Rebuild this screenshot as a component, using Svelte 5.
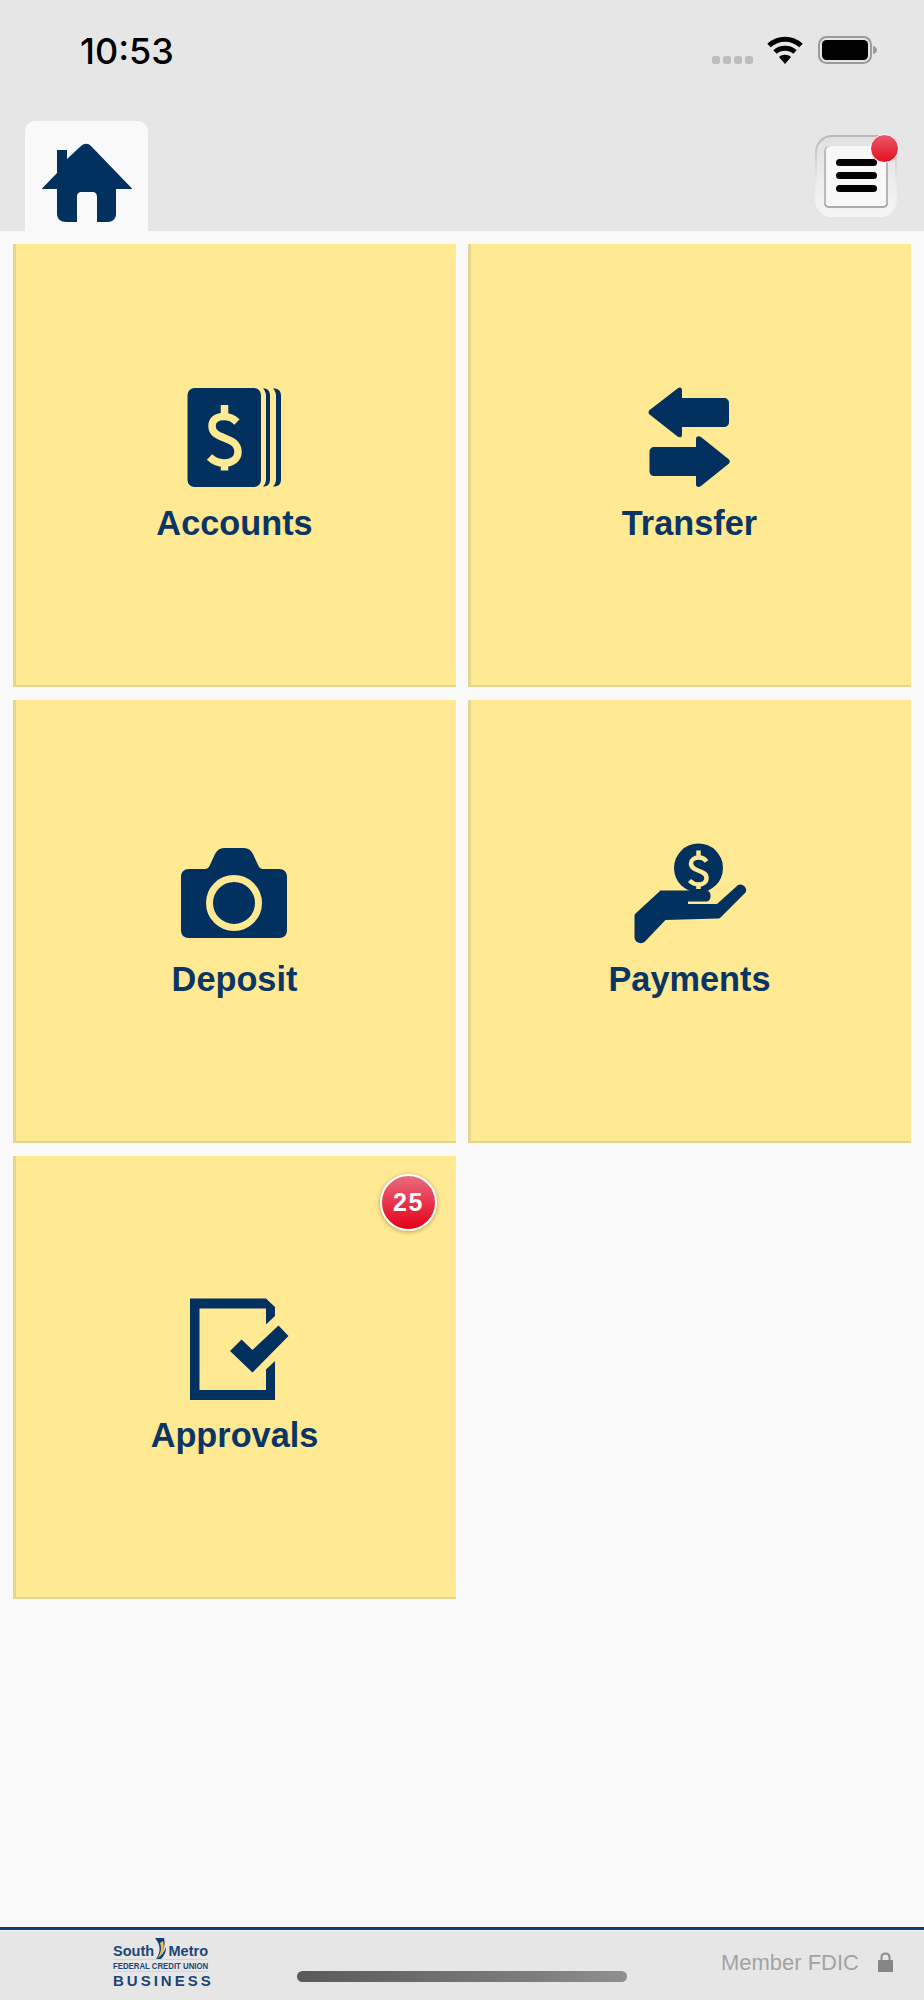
<script>
  const navy = '#02305f';
</script>

<div class="page">
  <header class="head">
    <div class="status">
      <span class="time">10:53</span>
      <svg class="sys" viewBox="712 36 165 28" width="165" height="28" aria-hidden="true">
        <g fill="#bdbdbd">
          <rect x="712" y="56" width="8" height="8" rx="2.5"/>
          <rect x="723" y="56" width="8" height="8" rx="2.5"/>
          <rect x="734" y="56" width="8" height="8" rx="2.5"/>
          <rect x="745" y="56" width="8" height="8" rx="2.5"/>
        </g>
        <g fill="none" stroke="#000" stroke-width="5">
          <path d="M769 45.5C778 37 792 37 801 45.5"/>
          <path d="M775 52C780.500 47 789.500 47 795 52"/>
        </g>
        <path d="M785 64L779 57C782 54 788 54 791 57Z" fill="#000"/>
        <rect x="819" y="37" width="52" height="26" rx="7.5" fill="none" stroke="#9b9b9b" stroke-width="2"/>
        <rect x="822" y="40" width="46" height="20" rx="4.5" fill="#000"/>
        <path d="M873 46C875.500 46.500 877 48 877 50S875.500 53.500 873 54Z" fill="#9b9b9b"/>
      </svg>
    </div>
    <nav class="nav">
      <div class="tab">
        <svg viewBox="42 143 90 79" width="90" height="79" aria-hidden="true">
          <path fill={navy} d="M57 150H67V159L81 146C84.500 143 88 143 91 146L132 188.500V189H116V214C116 219 112 222 108 222H97V197C97 193.500 95.500 192 92 192H82C78.500 192 77 193.500 77 197V222H66C61 222 57 219 57 214V189H42V188.500L57 173Z"/>
        </svg>
      </div>
      <button class="menu" aria-label="Menu">
        <span class="menu-inner">
          <span class="sheet">
            <i></i><i></i><i></i>
          </span>
        </span>
        <span class="dot"></span>
      </button>
    </nav>
  </header>

  <main class="grid">
    <div class="tile">
      <svg viewBox="175 379 120 110" width="120" height="110" aria-hidden="true">
        <rect x="187.500" y="388" width="73.500" height="99" rx="7" fill={navy}/>
        <path d="M263 388.500C268 388.500 270 391 270 396V479C270 484 268 486.500 263 486.500C265 484.500 266 482 266 479V396C266 393 265 390.500 263 388.500Z" fill={navy}/>
        <path d="M273 388.500C279 388.500 281 391 281 396V479C281 484 279 486.500 273 486.500C275 484.500 276 482 276 479V396C276 393 275 390.500 273 388.500Z" fill={navy}/>
        <g fill="none" stroke="#ffe992" stroke-width="7.500">
          <path d="M237 422C233 418 229 416.500 224 416.500C216 416.500 212 420.500 212 426C212 441 238 435 238 452C238 459 232 463 224 463C218.500 463 213.500 461 209.500 457"/>
          <path d="M224.500 405V416M224.500 463V470.500"/>
        </g>
      </svg>
      <span class="label">Accounts</span>
    </div>

    <div class="tile">
      <svg viewBox="630.5 379 120 110" width="120" height="110" aria-hidden="true">
        <path fill={navy} d="M649.500 410.500L678 388.500C680.500 386.500 682.500 387.500 682.500 390.500V398H724C727.500 398 729.500 400 729.500 403V422C729.500 425.500 727.500 427 724 427H682.500V434.500C682.500 437.500 680.500 438 678 436.500L649.500 414C649 413 649 411.500 649.500 410.500Z"/>
        <path fill={navy} d="M729.500 459.500L701.500 437C699 435.500 696.500 436 696.500 439V447H655C652 447 650 449 650 452V471C650 474 652 476 655 476H696.500V484C696.500 487 699 488 701.500 486L729.500 463.500C730.500 462.500 730.500 460.500 729.500 459.500Z"/>
      </svg>
      <span class="label">Transfer</span>
    </div>

    <div class="tile">
      <svg viewBox="175 834 120 110" width="120" height="110" aria-hidden="true">
        <path fill={navy} d="M189 868H205C207 868 208.500 867 209.500 865L215 853C217 849 220 847 224 847H244C248 847 251 849 253 853L258.500 865C259.500 867 261 868 263 868H279C284 868 287 871 287 876V929C287 934 284 937 279 937H189C184 937 181 934 181 929V876C181 871 184 868 189 868Z"/>
        <circle cx="234" cy="902" r="24.500" fill="none" stroke="#ffe992" stroke-width="7"/>
      </svg>
      <span class="label">Deposit</span>
    </div>

    <div class="tile">
      <svg viewBox="629.5 834 120 110" width="120" height="110" aria-hidden="true">
        <circle cx="698" cy="867" r="24.500" fill={navy}/>
        <g fill="none" stroke="#ffe992" stroke-width="4.500">
          <path d="M706 860.500C704 857.500 701.500 856.500 698.500 856.500C693.500 856.500 690.500 859 690.500 862.500C690.500 871 706 868.500 706 877C706 881 702.500 883.500 698 883.500C694.500 883.500 691.500 882 689 879.500"/>
          <path d="M698 849.500V856.500M698 883.500V888"/>
        </g>
        <path fill={navy} d="M660 889.500H706C711.500 889.500 711.500 900.500 706 900.500H687.500V903H716.500L737 884.500C741 881 748 887 745 891.500L720 916.500C719 917.500 718 917.500 717 917.500L665 919L644 941C641 943.500 634 942 634 936V915C634 914 634.500 913 635 912.500L659 890.500C659 890 659.500 889.500 660 889.500Z"/>
      </svg>
      <span class="label">Payments</span>
    </div>

    <div class="tile">
      <span class="count">25</span>
      <svg viewBox="175 1290 120 110" width="120" height="110" aria-hidden="true">
        <path fill={navy} d="M190 1297.500H266L275 1306V1315L266 1323.500V1307.500H199.500V1389H266V1368.500L275 1360V1399H190Z"/>
        <path fill={navy} d="M230 1350L241.500 1338.500L252.500 1349L278.500 1324.500L288.500 1335L252.500 1371.500Z"/>
      </svg>
      <span class="label">Approvals</span>
    </div>
  </main>

  <footer class="foot">
    <div class="logo">
      <div class="logo-top">
        <span>South</span>
        <svg viewBox="0 0 14 21" width="14" height="21" aria-hidden="true">
          <path d="M1 0H10C12 8 9 16 3 21H2C7 14 7 7 1 0Z" fill="#0d3e74"/>
          <path d="M6 5C8 10 7 15 3.500 20C9 16 11 10 9 3Z" fill="#f2c23e"/>
          <path d="M3 21H7C10 18 12.500 13 12 9C10.500 14 7 18 3 21Z" fill="#0d3e74"/>
        </svg>
        <span>Metro</span>
      </div>
      <div class="rule first"></div>
      <div class="logo-mid">FEDERAL CREDIT UNION</div>
      <div class="rule second"></div>
      <div class="logo-bot">BUSINESS</div>
    </div>
    <div class="fdic">
      <span>Member FDIC</span>
      <svg viewBox="0 0 15 20" width="15" height="20" aria-hidden="true">
        <path d="M3.500 9V5.500C3.500 3 5 1.500 7.500 1.500S11.500 3 11.500 5.500V9" fill="none" stroke="#8d8d8d" stroke-width="2"/>
        <rect x="0" y="8" width="15" height="12" rx="1" fill="#858585"/>
      </svg>
    </div>
    <div class="indicator"></div>
  </footer>
</div>

<style>
  :global(body) {
    margin: 0;
    background: #f9f9f9;
  }
  .page {
    position: relative;
    width: 924px;
    height: 2000px;
    display: flex;
    flex-direction: column;
    font-family: "Liberation Sans", Arial, sans-serif;
    background: #f9f9f9;
    overflow: hidden;
  }
  .head {
    height: 231px;
    flex: none;
    background: #e6e6e6;
    display: flex;
    flex-direction: column;
  }
  .status {
    height: 100px;
    flex: none;
    box-sizing: border-box;
    padding: 36px 47px 0 80px;
    display: flex;
    justify-content: space-between;
    align-items: flex-start;
  }
  .time {
    font-family: Inter, "Liberation Sans", sans-serif;
    font-size: 36px;
    font-weight: 500;
    line-height: 30px;
    color: #000;
    letter-spacing: 0;
  }
  .sys {
    display: block;
  }
  .nav {
    flex: 1;
    display: flex;
    justify-content: space-between;
    align-items: flex-start;
    padding: 21px 27px 0 25px;
  }
  .tab {
    width: 123px;
    height: 110px;
    box-sizing: border-box;
    background: #f9f9f9;
    border-radius: 10px 10px 0 0;
    padding: 22px 0 0 17px;
  }
  .tab svg {
    display: block;
  }
  .menu {
    position: relative;
    width: 82px;
    height: 82px;
    margin-top: 14px;
    padding: 2px;
    border: 0;
    border-radius: 17px;
    background: linear-gradient(#b6b7b6, #e9e9e9 55%, #f6f6f6);
    box-sizing: border-box;
    display: block;
  }
  .menu-inner {
    display: block;
    height: 100%;
    box-sizing: border-box;
    border-radius: 15px;
    background: linear-gradient(#e0e1e0, #f5f5f5);
    padding: 9px 7px 7px;
  }
  .sheet {
    display: flex;
    flex-direction: column;
    align-items: center;
    gap: 6px;
    box-sizing: border-box;
    height: 62px;
    padding-top: 13px;
    border-radius: 5px;
    background: #f8f8f8;
    box-shadow: inset 0 -2px 0 #aaaaaa, inset 2px 0 0 #bdbdbd, inset -2px 0 0 #b4b4b4;
  }
  .sheet i {
    display: block;
    width: 41px;
    height: 7px;
    border-radius: 4px;
    background: #000;
  }
  .dot {
    position: absolute;
    left: 55px;
    top: -1px;
    width: 27px;
    height: 27px;
    border-radius: 50%;
    border: 1.5px solid #fff;
    background: linear-gradient(#e8586c, #e50f1f);
    box-sizing: content-box;
  }
  .grid {
    flex: 1;
    display: grid;
    grid-template-columns: 443px 443px;
    grid-auto-rows: 443px;
    column-gap: 12px;
    row-gap: 13px;
    padding: 13px 0 0 13px;
    align-content: start;
  }
  .tile {
    position: relative;
    background: #ffe992;
    box-shadow: inset 3px 0 0 #e4d692, inset 0 -2px 0 #e4d692;
    display: flex;
    flex-direction: column;
    align-items: center;
    padding-top: 135px;
    box-sizing: border-box;
  }
  .tile svg {
    display: block;
    flex: none;
  }
  .label {
    margin-top: 15px;
    font-size: 34.300px;
    font-weight: 700;
    line-height: 38px;
    color: #0a3564;
  }
  .count {
    position: absolute;
    left: 367px;
    top: 18px;
    width: 53px;
    height: 53px;
    border: 2px solid #fff;
    border-radius: 50%;
    background: linear-gradient(#ea6b7e, #e60019);
    box-shadow: 0 1px 4px rgba(90, 70, 0, 0.45);
    color: #fff;
    font-size: 25px;
    font-weight: 700;
    letter-spacing: 1.500px;
    line-height: 53px;
    text-align: center;
    box-sizing: content-box;
  }
  .foot {
    position: relative;
    height: 73px;
    flex: none;
    box-sizing: border-box;
    background: #e6e6e6;
    border-top: 3px solid #0d3e74;
    box-shadow: inset 0 1px 0 #f2f2f2;
    display: flex;
    justify-content: space-between;
    align-items: flex-start;
    padding: 15px 31px 0 113px;
  }
  .logo {
    width: 95px;
    color: #1a4578;
    font-weight: 700;
    white-space: nowrap;
  }
  .logo-top {
    display: flex;
    justify-content: space-between;
    align-items: center;
    font-size: 14.500px;
    line-height: 13px;
    height: 13px;
    letter-spacing: 0;
  }
  .logo-top svg {
    margin-top: -7px;
  }
  .rule {
    height: 1px;
    background: #f0d68a;
  }
  .rule.first {
    margin: 1px 0 1px;
  }
  .rule.second {
    margin: 0 0 1px;
  }
  .logo-mid {
    font-size: 7.800px;
    line-height: 10px;
    letter-spacing: 0;
    transform: scaleY(1.25);
  }
  .logo-bot {
    font-size: 15px;
    line-height: 15px;
    letter-spacing: 3px;
  }
  .fdic {
    display: flex;
    align-items: center;
    gap: 19px;
    color: #a3a3a3;
    font-size: 22px;
    line-height: 22px;
    margin-top: 7px;
  }
  .fdic svg {
    display: block;
    margin-top: -3px;
  }
  .indicator {
    position: absolute;
    left: 297px;
    top: 41px;
    width: 330px;
    height: 11px;
    border-radius: 6px;
    background: linear-gradient(90deg, #5a5a5a, #7c7c7c 70%, #8f8f8f);
  }
</style>
